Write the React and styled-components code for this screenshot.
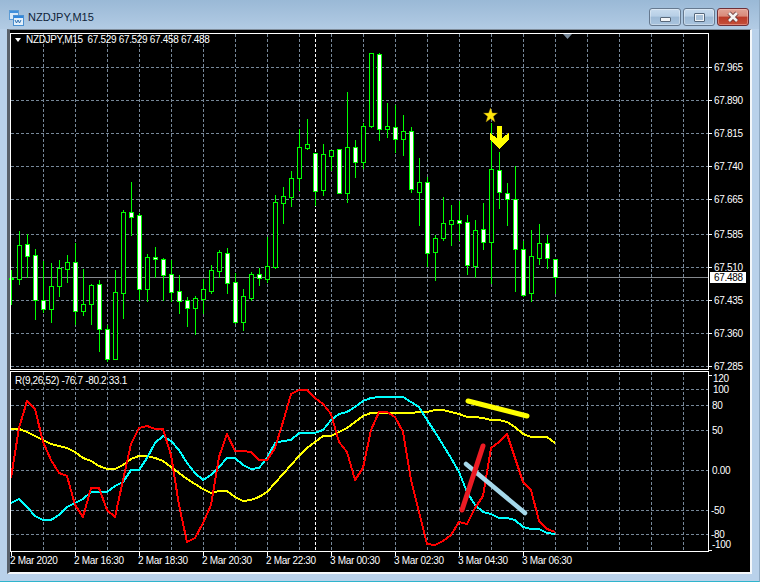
import React from 'react'
import styled, { createGlobalStyle } from 'styled-components'

const GlobalStyle = createGlobalStyle`
    html, body {
        margin: 0;
        padding: 0;
        background: #b9d1ea;
    }
`

const Window = styled.div`
    width: 760px;
    height: 582px;
    box-sizing: border-box;
    overflow: hidden;
    display: flex;
    flex-direction: column;
    background: #b9d1ea;
    border-bottom: 1px solid #2fb4cc;
    border-right: 1px solid #8fa9c2;
`

const TitleBar = styled.div`
    height: 29px;
    flex: none;
    display: flex;
    align-items: flex-start;
    padding: 0 10px 0 9px;
    box-sizing: border-box;
    background: linear-gradient(#9ab9d6, #b2cbe4);
`

const TitleIcon = styled.svg`
    width: 15px;
    height: 16px;
    margin-top: 10px;
    flex: none;
`

const TitleText = styled.span`
    margin: 11px 0 0 4px;
    font: 11px/13px "Liberation Sans", sans-serif;
    color: #0f2338;
    flex: 1;
`

const Buttons = styled.div`
    display: flex;
    gap: 2px;
    margin-top: 8px;
`

const WinButton = styled.div`
    width: 32px;
    height: 18px;
    box-sizing: border-box;
    display: flex;
    align-items: center;
    justify-content: center;
    border: 1px solid ${p => (p.$close ? '#6e3038' : '#66798f')};
    border-radius: 3px;
    box-shadow: inset 0 0 0 1px ${p => (p.$close ? 'rgba(255,200,190,.45)' : 'rgba(255,255,255,.35)')};
    background: ${p => (p.$close
        ? 'linear-gradient(#e0a497 0, #d98a7a 45%, #bb3a28 50%, #c4503a 100%)'
        : 'linear-gradient(#c8dbee 0, #b7cfe6 45%, #9dbad6 50%, #a9c4de 100%)')};
`

const MinGlyph = styled.div`
    width: 11px;
    height: 5px;
    margin-top: 5px;
    box-sizing: border-box;
    background: #f2f5f8;
    border: 1px solid #59687a;
    border-radius: 1px;
`

const MaxGlyph = styled.div`
    width: 11px;
    height: 9px;
    box-sizing: border-box;
    background: #a9c2da;
    border: 1px solid #55677b;
    box-shadow: inset 0 0 0 1px #f2f5f8;
    border-radius: 1px;
`

const ChartFrame = styled.div`
    flex: none;
    width: 745px;
    margin-left: 7px;
    box-sizing: border-box;
    display: flex;
    flex-direction: column;
    gap: 1px;
    padding-top: 3px;
    background: #000;
    border-top: 1px solid #7f8c9a;
    border-left: 3px solid #59616b;
    border-right: 2px solid #f4f7fa;
    border-bottom: 2px solid #f4f7fa;
`

const Pane = styled.div`
    position: relative;
    height: ${p => p.$height}px;
`

const PaneSvg = styled.svg`
    display: block;
    width: 740px;
    height: 100%;
    overflow: visible;
`

const Legend = styled.div`
    position: absolute;
    left: ${p => p.$left}px;
    top: ${p => p.$top}px;
    display: flex;
    align-items: center;
    gap: 5px;
    font: 10px/12px "Liberation Sans", sans-serif;
    letter-spacing: -0.32px;
    color: #fff;
    white-space: pre;
`

const LegendArrow = styled.span`
    width: 0;
    height: 0;
    border-left: 3.5px solid transparent;
    border-right: 3.5px solid transparent;
    border-top: 4px solid #fff;
`

const AxisText = styled.text`
    font: 10px "Liberation Sans", sans-serif;
    letter-spacing: -0.32px;
    fill: ${p => p.$fill || '#fff'};
`

const TimeAxis = styled.div`
    height: 20px;
    display: flex;
    margin-top: -1px;
`

const TimeLabel = styled.div`
    width: 64px;
    flex: none;
    font: 10px/10px "Liberation Sans", sans-serif;
    letter-spacing: -0.32px;
    color: #fff;
    white-space: nowrap;

    &::before {
        content: '';
        display: block;
        width: 1px;
        height: 4px;
        margin-left: 1px;
        background: #fff;
    }
`

const GRID = '#778899'
const LIME = '#00ff00'

const gridX = Array.from({ length: 21 }, (_, i) => 43 + i * 32).filter(x => x < 708)

// [wick top, wick bottom, body top, body bottom, white body]
const candles = [
    [270, 304, 278, 279, 0], [231, 284, 245, 279, 0], [234, 277, 244, 256, 1], [249, 319, 255, 300, 1],
    [261, 312, 300, 309, 1], [263, 322, 286, 309, 0], [260, 296, 268, 286, 0], [255, 282, 262, 269, 0],
    [243, 324, 262, 311, 1], [269, 315, 304, 311, 0], [284, 324, 285, 304, 0], [280, 351, 284, 329, 1],
    [325, 361, 329, 359, 1], [270, 359, 292, 359, 0], [210, 318, 212, 293, 0], [182, 235, 212, 217, 1],
    [213, 300, 215, 289, 1], [254, 301, 257, 289, 0], [247, 277, 257, 259, 1], [258, 300, 259, 275, 1],
    [260, 301, 274, 292, 1], [275, 313, 291, 301, 1], [297, 326, 300, 308, 1], [296, 334, 298, 308, 0],
    [279, 313, 289, 299, 0], [265, 293, 270, 291, 0], [250, 277, 252, 271, 0], [248, 293, 253, 283, 1],
    [273, 323, 282, 322, 1], [289, 330, 296, 322, 0], [272, 300, 274, 298, 0], [268, 285, 274, 278, 1],
    [237, 282, 266, 279, 0], [195, 268, 202, 267, 0], [187, 223, 196, 203, 0], [171, 206, 178, 197, 0],
    [129, 190, 147, 178, 0], [119, 149, 144, 148, 0], [153, 205, 153, 191, 1], [144, 195, 154, 190, 0],
    [150, 170, 150, 156, 0], [149, 193, 149, 193, 1], [92, 202, 147, 193, 0], [140, 177, 147, 162, 1],
    [123, 168, 126, 162, 0], [53, 127, 53, 126, 0], [53, 140, 54, 129, 1], [103, 137, 126, 129, 0],
    [105, 152, 127, 139, 1], [115, 155, 131, 139, 0], [127, 192, 131, 189, 1], [158, 225, 182, 192, 0],
    [177, 266, 182, 253, 1], [235, 280, 238, 252, 0], [197, 240, 223, 238, 0], [205, 245, 220, 224, 0],
    [201, 240, 220, 223, 1], [215, 274, 222, 265, 1], [220, 277, 230, 266, 0], [203, 249, 229, 242, 1],
    [123, 283, 169, 242, 0], [152, 208, 170, 192, 1], [183, 225, 193, 199, 1], [166, 291, 199, 249, 1],
    [241, 296, 249, 295, 1], [230, 301, 256, 293, 0], [224, 264, 243, 258, 0], [235, 268, 243, 258, 1],
    [259, 293, 259, 277, 1],
]

const series = values => values.map((y, i) => `${11 + i * 8},${y}`).join(' ')

const redLine = [
    478, 428, 401, 409, 442, 460, 473, 476, 505, 517, 488, 488, 510, 517, 480, 444, 428, 426, 429, 429,
    455, 505, 542, 538, 523, 505, 457, 434, 451, 451, 452, 460, 460, 448, 422, 394, 390, 390, 398, 404,
    414, 442, 452, 480, 468, 430, 412, 412, 417, 432, 480, 512, 544, 545, 541, 535, 522, 524, 508, 496,
    448, 442, 434, 458, 482, 490, 521, 529, 532,
]

const cyanLine = [
    503, 499, 507, 516, 520, 520, 515, 507, 503, 499, 492, 492, 492, 486, 482, 470, 470, 458, 443, 436,
    441, 450, 463, 473, 480, 475, 467, 458, 458, 465, 469, 468, 458, 443, 441, 440, 433, 433, 433, 430,
    420, 414, 412, 407, 401, 398, 397, 397, 397, 397, 402, 407, 420, 432, 445, 458, 472, 492, 505, 512,
    514, 518, 518, 520, 527, 529, 529, 533, 534,
]

const yellowLine = [
    429, 429, 432, 436, 440, 444, 446, 448, 452, 458, 461, 466, 469, 469, 465, 459, 456, 456, 458, 461,
    467, 473, 479, 484, 489, 493, 491, 491, 497, 501, 500, 497, 492, 483, 474, 465, 456, 448, 442, 436,
    436, 432, 428, 422, 416, 413, 413, 413, 413, 413, 413, 412, 412, 410, 410, 412, 414, 417, 417, 418,
    420, 420, 422, 427, 434, 437, 437, 437, 443,
]

const priceLevels = [
    [67, '67.965'], [100, '67.890'], [133, '67.815'], [166, '67.740'], [199, '67.665'],
    [234, '67.585'], [267, '67.510'], [300, '67.435'], [333, '67.360'], [366, '67.285'],
]

const indicatorGrid = [389, 405, 430, 470, 510, 534]

const indicatorLabels = [
    [378, '120', 713], [389, '100', 713], [405, '80', 712], [430, '50', 712],
    [470, '0.00', 712], [510, '-50', 711], [534, '-80', 711], [544, '-100', 712],
]

const timeLabels = [
    '2 Mar 2020', '2 Mar 16:30', '2 Mar 18:30', '2 Mar 20:30', '2 Mar 22:30',
    '3 Mar 00:30', '3 Mar 02:30', '3 Mar 04:30', '3 Mar 06:30',
]

const VerticalGrid = ({ top, bottom }) => (
    <g shapeRendering="crispEdges">
        {gridX.map(x => (
            <line key={x} x1={x + 0.5} x2={x + 0.5} y1={top} y2={bottom} stroke={GRID} strokeDasharray="3 2" />
        ))}
        <line x1={315.5} x2={315.5} y1={top} y2={bottom} stroke="#fff" strokeDasharray="3 2" />
    </g>
)

const HorizontalGrid = ({ rows }) => (
    <g shapeRendering="crispEdges">
        {rows.map(y => (
            <line key={y} x1={11} x2={708} y1={y + 0.5} y2={y + 0.5} stroke={GRID} strokeDasharray="3 2" />
        ))}
    </g>
)

const Candle = ({ x, data }) => {
    const [wickTop, wickBottom, bodyTop, bodyBottom, white] = data
    return (
        <g shapeRendering="crispEdges">
            <line x1={x + 0.5} x2={x + 0.5} y1={wickTop} y2={wickBottom + 1} stroke={LIME} />
            <rect
                x={x - 1.5}
                y={bodyTop + 0.5}
                width={4}
                height={Math.max(bodyBottom - bodyTop, 1)}
                fill={white ? '#fff' : '#000'}
                stroke={LIME}
            />
        </g>
    )
}

const PricePane = () => (
    <Pane $height={337}>
        <PaneSvg viewBox="10 33 740 337">
            <VerticalGrid top={34} bottom={369} />
            <HorizontalGrid rows={priceLevels.map(l => l[0])} />
            <line x1={11} x2={708} y1={277.5} y2={277.5} stroke="#85898e" shapeRendering="crispEdges" />
            <polygon points="563,34 572,34 567.5,39" fill="#778899" />
            {candles.map((c, i) => (
                <Candle key={i} x={11 + i * 8} data={c} />
            ))}
            <polygon
                points="490.5,108 492.4,113 497.5,113 493.4,116.4 495,122 490.5,118.7 486,122 487.6,116.4 483.5,113 488.6,113"
                fill="#ffe60a"
                stroke="#8a6d10"
                strokeWidth="0.4"
            />
            <polygon
                points="497,126 502,126 502,138 509,133 509,139 499.5,149 490,139 490,133 497,138"
                fill="#ffff00"
                shapeRendering="crispEdges"
            />
            <rect x={10.5} y={33.5} width={698} height={336} fill="none" stroke="#fff" shapeRendering="crispEdges" />
            {priceLevels.map(([y, label]) => (
                <g key={label}>
                    <line x1={709} x2={712} y1={y + 0.5} y2={y + 0.5} stroke="#fff" shapeRendering="crispEdges" />
                    <AxisText x={714} y={y + 4}>{label}</AxisText>
                </g>
            ))}
            <rect x={710} y={272} width={36} height={11} fill="#fff" />
            <AxisText x={714} y={281} $fill="#000">67.488</AxisText>
        </PaneSvg>
        <Legend $left={5} $top={1}>
            <LegendArrow />
            <span>NZDJPY,M15  67.529 67.529 67.458 67.488</span>
        </Legend>
    </Pane>
)

const IndicatorPane = () => (
    <Pane $height={181}>
        <PaneSvg viewBox="10 371 740 181">
            <VerticalGrid top={372} bottom={551} />
            <HorizontalGrid rows={indicatorGrid} />
            <g fill="none" strokeWidth="2" shapeRendering="crispEdges" strokeLinejoin="round">
                <polyline points={series(yellowLine)} stroke="#ffff00" />
                <polyline points={series(cyanLine)} stroke="#00ffff" />
                <polyline points={series(redLine)} stroke="#ff0000" />
            </g>
            <g strokeLinecap="round">
                <line x1={468} y1={401} x2={527} y2={416} stroke="#ffff00" strokeWidth="5" />
                <line x1={466} y1={464} x2={525} y2={513} stroke="#a5d8ea" strokeWidth="4.5" />
                <line x1={462} y1={510} x2={483} y2={446} stroke="#ed1c24" strokeWidth="5" />
            </g>
            <rect x={10.5} y={371.5} width={698} height={180} fill="none" stroke="#fff" shapeRendering="crispEdges" />
            <line x1={709} x2={712} y1={375.5} y2={375.5} stroke="#fff" shapeRendering="crispEdges" />
            <line x1={709} x2={712} y1={550.5} y2={550.5} stroke="#fff" shapeRendering="crispEdges" />
            {indicatorLabels.map(([y, label, x]) => (
                <AxisText key={label} x={x} y={y + 4}>{label}</AxisText>
            ))}
        </PaneSvg>
        <Legend $left={5} $top={4}>
            <span>R(9,26,52) -76.7 -80.2 33.1</span>
        </Legend>
    </Pane>
)

const App = () => (
    <Window>
        <GlobalStyle />
        <TitleBar>
            <TitleIcon viewBox="0 0 15 16">
                <rect x="0.5" y="0.5" width="9" height="9" fill="#d6e8f8" stroke="#5b9bd5" />
                <rect x="1" y="1" width="8" height="2" fill="#3f8fdc" />
                <rect x="4.5" y="5.5" width="10" height="10" fill="#e3f0fb" stroke="#4a8fd0" />
                <rect x="5" y="6" width="9" height="2" fill="#2f86dc" />
                <path d="M6 10l1.5 3 1.5-3 1.5 3 1.5-3" fill="none" stroke="#2f6fb0" />
            </TitleIcon>
            <TitleText>NZDJPY,M15</TitleText>
            <Buttons>
                <WinButton><MinGlyph /></WinButton>
                <WinButton><MaxGlyph /></WinButton>
                <WinButton $close>
                    <svg width="14" height="12" viewBox="0 0 14 12">
                        <path d="M3 2l8 8M11 2l-8 8" stroke="#6b3a3a" strokeWidth="4.4" />
                        <path d="M3 2l8 8M11 2l-8 8" stroke="#f4f2f0" strokeWidth="2.6" />
                    </svg>
                </WinButton>
            </Buttons>
        </TitleBar>
        <ChartFrame>
            <PricePane />
            <IndicatorPane />
            <TimeAxis>
                {timeLabels.map(label => (
                    <TimeLabel key={label}>{label}</TimeLabel>
                ))}
            </TimeAxis>
        </ChartFrame>
    </Window>
)

export default App
